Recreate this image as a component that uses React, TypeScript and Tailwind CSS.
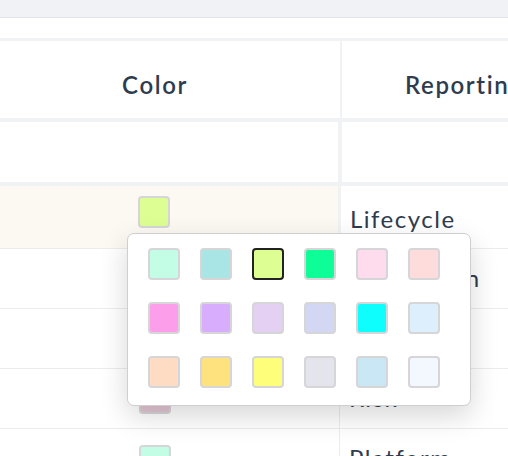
const palette = [
  ['#c4fde6', '#a9e5e4', '#ddfe92', '#0efe97', '#fedced', '#fedcdc'],
  ['#fd9eeb', '#d9adfd', '#e3d0f2', '#d4d7f4', '#0efefd', '#ddeefd'],
  ['#fedcc4', '#fee27e', '#fefe7a', '#e3e4ec', '#c9e7f5', '#f3f8fe'],
]

const rows = [
  { label: 'Integration', color: '#c4fde6' },
  { label: 'Security', color: '#e3d0f2' },
  { label: 'Risk', color: '#e5c5d3' },
  { label: 'Platform', color: '#c4fde6' },
]

const Swatch = ({ color, selected }: { color: string; selected?: boolean }) => (
  <div
    className={`h-[32px] w-[32px] rounded-[4px] border-2 ${selected ? 'border-[#222222]' : 'border-[#d6d6d8]'}`}
    style={{ backgroundColor: color }}
  />
)

export default function App() {
  return (
    <div className="relative h-[456px] w-[508px] overflow-hidden bg-white font-['Lato',sans-serif] text-[#2f3c4e]">
      <div className="h-[18px] border-b border-[#e1e2e5] bg-[#f0f2f5]" />
      <div className="h-[20px] bg-white" />

      {/* table */}
      <div className="bg-[#f1f2f4] pt-[3px]">
        <div className="flex h-[77px]">
          <div className="flex w-[340px] shrink-0 items-center justify-center bg-white pt-[11px]">
            <span className="ml-[-30px] text-[24px] font-semibold tracking-[1.6px]">Color</span>
          </div>
          <div className="ml-[2px] flex min-w-0 flex-1 items-center overflow-hidden bg-white pl-[63px] pt-[11px]">
            <span className="whitespace-nowrap text-[24px] font-semibold tracking-[1.6px]">Reporting</span>
          </div>
        </div>
        <div className="mt-[4px] flex h-[60px]">
          <div className="w-[338px] shrink-0 bg-white" />
          <div className="ml-[4px] flex-1 bg-white" />
        </div>
        <div className="mt-[4px] flex h-[62px]">
          <div className="flex w-[338px] shrink-0 justify-center bg-[#fbf9f1] pt-[10px]">
            <div className="ml-[-30px]">
              <Swatch color="#ddfe92" />
            </div>
          </div>
          <div className="ml-[3px] min-w-0 flex-1 bg-white pl-[9px] pt-[18px]">
            <span className="text-[24px] leading-[30px] tracking-[1.5px]">Lifecycle</span>
          </div>
        </div>
      </div>

      {rows.map((r, i) => (
        <div key={r.label} className="flex h-[60px] border-t border-[#ececec]">
          <div className={`flex w-[339px] shrink-0 justify-center ${i === 3 ? 'pt-[16px]' : 'pt-[13px]'}`}>
            <div className="ml-[-30px]">
              <Swatch color={r.color} />
            </div>
          </div>
          <div className="min-w-0 flex-1 overflow-hidden border-l border-[#ececec] pl-[9px] pt-[14px]">
            <span className="whitespace-nowrap text-[24px] leading-[30px] tracking-[1.5px]">{r.label}</span>
          </div>
        </div>
      ))}

      {/* colour picker popover */}
      <div className="absolute left-[127px] top-[233px] w-[344px] rounded-[7px] border border-[#cfcfd1] bg-white pb-[17px] pl-[20px] pt-[14px] shadow-[0_10px_28px_rgba(0,0,0,0.16)]">
        <div className="grid w-[292px] grid-cols-6 gap-x-[20px] gap-y-[22px]">
          {palette.flat().map((c, i) => (
            <Swatch key={i} color={c} selected={i === 2} />
          ))}
        </div>
      </div>
    </div>
  )
}
